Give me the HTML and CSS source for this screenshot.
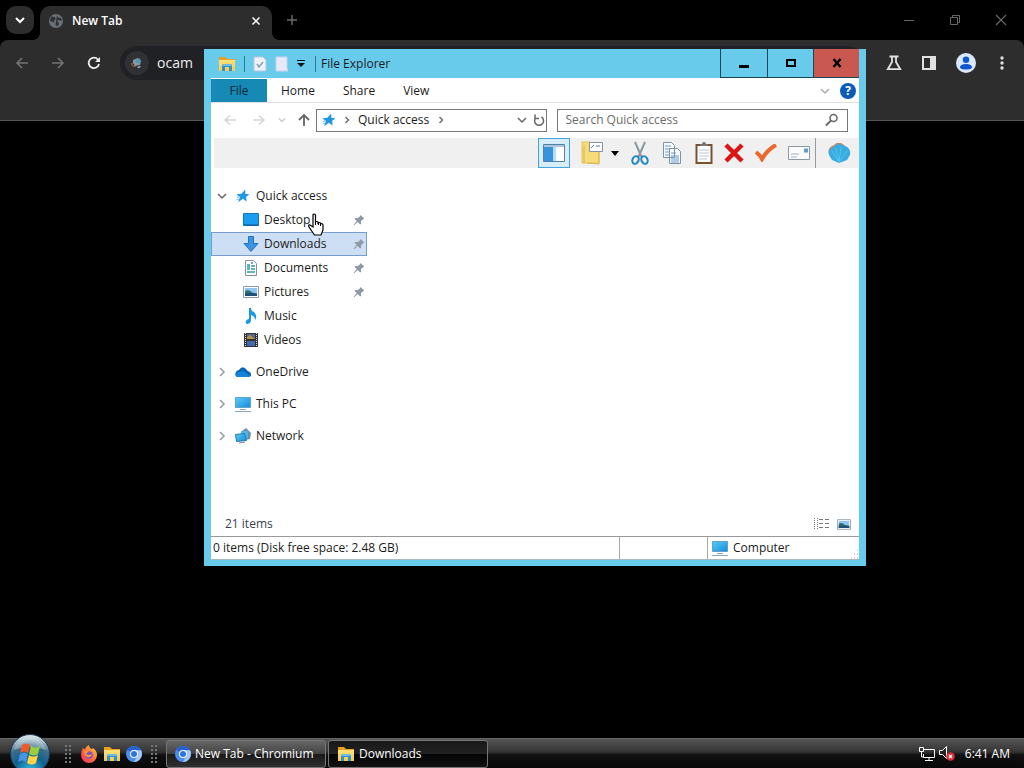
FILE: index.html
```html
<!DOCTYPE html>
<html lang="en">
<head>
<meta charset="utf-8">
<title>Desktop</title>
<link rel="stylesheet" href="styles.css">
</head>
<body>
<svg class="defs" aria-hidden="true">
  <defs>
    <linearGradient id="blue" x1="0" y1="0" x2="1" y2="1"><stop offset="0" stop-color="#59cdfa"/><stop offset="1" stop-color="#168bd6"/></linearGradient>
    <linearGradient id="fold" x1="0" y1="0" x2="0" y2="1"><stop offset="0" stop-color="#ffe27a"/><stop offset="1" stop-color="#f9c846"/></linearGradient>
    <radialGradient id="orb" cx=".5" cy=".95" r=".9"><stop offset="0" stop-color="#35c3e8"/><stop offset=".45" stop-color="#11608f"/><stop offset=".75" stop-color="#3f6f8c"/><stop offset="1" stop-color="#d5e2ea"/></radialGradient>
    <linearGradient id="fire" x1="1" y1="0" x2="0" y2="1"><stop offset="0" stop-color="#ffd93b"/><stop offset=".5" stop-color="#ff7139"/><stop offset="1" stop-color="#f0286a"/></linearGradient>
  </defs>
  <symbol id="folder" viewBox="0 0 18 16"><path d="M1 1h6l2 2h8v4H1z" fill="#e9a01c"/><path d="M1 4h16v11H1z" fill="url(#fold)"/><path d="M4 15V9.500q0-1.500 1.500-1.500h7q1.500 0 1.500 1.500V15h-3v-4H7v4z" fill="#2f93d3"/><path d="M4 9.500Q4 8 5.500 8h7Q14 8 14 9.500V10H4z" fill="#69bce9"/></symbol>
  <symbol id="chromium" viewBox="0 0 16 16"><circle cx="8" cy="8" r="8" fill="#4c8df2"/><path d="M8 8 1.200 3.800A8 8 0 0 1 15 4.200H8z" fill="#2562cf"/><path d="M8 4.200h7A8 8 0 0 1 8 16l3.300-6z" fill="#a5c8fa"/><circle cx="8" cy="8" r="4" fill="#fff"/><circle cx="8" cy="8" r="3" fill="#2c73e3"/></symbol>
  <symbol id="star" viewBox="0 0 14 14"><path d="M9.200.5 9.300 4.700 13.500 5.500 10.200 7.800 10.500 12.500 6.800 9.800 2.300 13.200 3.800 8.300.5 5.200 5.500 4.700z" fill="#2196e3"/><path d="m1 8.500 3-1M.5 11l3-1" stroke="#74bdf0"/></symbol>
  <symbol id="pc" viewBox="0 0 18 16"><path d="M1.500 1.500h15v10h-15z" fill="url(#blue)" stroke="#5fa3cc"/><path d="M6 13.500h6M1 15.500h16" stroke="#8aa6b8"/></symbol>
  <symbol id="pin" viewBox="0 0 12 12"><path d="m7.500 1 3.800 3.600-1.300.6-2 2 .1 2.600-1 .8L4.600 8 1.200 11.300.6 10.800 3.700 7 1.500 4.800l1-.8 2.500.1 2-1.900z" fill="#8d9aa8"/></symbol>
  <symbol id="pic" viewBox="0 0 16 12"><path d="M.5.5h15v11H.5z" fill="#fff" stroke="#8c9aa5"/><path d="M2 2h12v8H2z" fill="#8dc5ef"/><path d="M2 5q4-2 7 1.500l5 1V10H2z" fill="#2e6f75"/><path d="M2 7.500q6-1 12 .5v2H2z" fill="#205078"/></symbol>
  <symbol id="right" viewBox="0 0 8 10"><path d="m2 1 4 4-4 4" fill="none" stroke="currentColor" stroke-width="1.500"/></symbol>
  <symbol id="down" viewBox="0 0 10 8"><path d="m1 2 4 4 4-4" fill="none" stroke="currentColor" stroke-width="1.500"/></symbol>
</svg>

<main class="desktop">
  <section class="browser" aria-label="Chromium">
    <div class="tabstrip">
      <button class="tab-search" aria-label="Search tabs"><svg width="10" height="8" viewBox="0 0 10 8"><path d="m1 2 4 4 4-4" fill="none" stroke="#fff" stroke-width="2"/></svg></button>
      <div class="tab">
        <svg width="16" height="16" viewBox="0 0 16 16"><circle cx="8" cy="8" r="7" fill="#6b7077"/><path d="M3 3.500 6.500 4 8 6 6 7.500 6.500 10 5 9 2 8zM9 2l1 2.500 3 .5 1 3-3.500-1L9 8l2 2-1 3.500L7.500 12" fill="#303135"/></svg>
        <span class="tab-title">New Tab</span>
        <button class="plain" aria-label="Close tab"><svg width="10" height="10" viewBox="0 0 10 10"><path d="m1.500 1.500 7 7m0-7-7 7" stroke="#fff" stroke-width="1.500"/></svg></button>
      </div>
      <button class="plain new-tab" aria-label="New tab"><svg width="12" height="12" viewBox="0 0 12 12"><path d="M6 1v10M1 6h10" stroke="#66686b" stroke-width="1.500"/></svg></button>
      <div class="browser-controls">
        <button class="plain" aria-label="Minimize"><svg width="12" height="12" viewBox="0 0 12 12"><path d="M1 6.500h10" stroke="#666"/></svg></button>
        <button class="plain" aria-label="Restore"><svg width="12" height="12" viewBox="0 0 12 12"><path d="M1.500 3.500h7v7h-7zM3.500 3.500v-2h7v7h-2" fill="none" stroke="#666"/></svg></button>
        <button class="plain" aria-label="Close"><svg width="12" height="12" viewBox="0 0 12 12"><path d="m1 1 10 10M11 1 1 11" stroke="#666" stroke-width="1.200"/></svg></button>
      </div>
    </div>
    <div class="browser-bar">
      <button class="plain" aria-label="Back"><svg width="14" height="12" viewBox="0 0 14 12"><path d="M13 6H2m5-5L2 6l5 5" fill="none" stroke="#737373" stroke-width="1.600"/></svg></button>
      <button class="plain" aria-label="Forward"><svg width="14" height="12" viewBox="0 0 14 12"><path d="M1 6h11M7 1l5 5-5 5" fill="none" stroke="#737373" stroke-width="1.600"/></svg></button>
      <button class="plain" aria-label="Reload"><svg width="14" height="14" viewBox="0 0 14 14"><path d="M12 8a5.200 5.200 0 1 1-1.200-4.600L12.500 5" fill="none" stroke="#eee" stroke-width="1.800"/><path d="M13 1v5H8z" fill="#eee"/></svg></button>
      <label class="omnibox">
        <span class="site-icon"><svg width="14" height="14" viewBox="0 0 14 14"><path d="m3 4 5-2 3 3-1 4-5 1-2-3z" fill="#8799a3"/><path d="m5 5 4-3 2 3-3 3z" fill="#4f95b5"/><path d="M2 7q-1 4 4 3" stroke="#bd7340" fill="none"/><path d="m7 11 4-1-2 2z" fill="#e4e8ea"/></svg></span>
        <input type="text" value="ocam" aria-label="Address">
      </label>
      <div class="browser-tools">
        <button class="plain" aria-label="Experiments"><svg width="16" height="16" viewBox="0 0 16 16"><path d="M3.500 1.500h9M6 2v5L1.800 14.200h12.400L10 7V2" fill="none" stroke="#e1e1e1" stroke-width="1.800"/></svg></button>
        <button class="plain" aria-label="Side panel"><svg width="16" height="16" viewBox="0 0 16 16"><path d="M2 2h12v12H2z" fill="none" stroke="#e1e1e1" stroke-width="2"/><path d="M9 2h5v12H9z" fill="#e1e1e1"/></svg></button>
        <button class="plain" aria-label="Profile"><svg width="20" height="20" viewBox="0 0 20 20"><circle cx="10" cy="10" r="10" fill="#dbe7fd"/><circle cx="10" cy="6.800" r="3.200" fill="#0b57d0"/><path d="M4 14.500Q4 11 10 11t6 3.500V15q-2 1.500-6 1.500T4 15z" fill="#0b57d0"/></svg></button>
        <button class="plain menu" aria-label="Menu"><svg width="4" height="14" viewBox="0 0 4 14"><g fill="#e1e1e1"><circle cx="2" cy="2" r="1.700"/><circle cx="2" cy="7" r="1.700"/><circle cx="2" cy="12" r="1.700"/></g></svg></button>
      </div>
    </div>
  </section>

  <section class="window" aria-label="File Explorer">
    <header class="titlebar">
      <div class="quick-tools">
        <svg width="18" height="16"><use href="#folder"/></svg>
        <span class="divider"></span>
        <button class="plain" aria-label="Properties"><svg width="14" height="16" viewBox="0 0 14 16"><path d="M1 1h9l3 3v11H1z" fill="#eef2fb" stroke="#b7c6dc"/><path d="m4 8 2 3 4-5" fill="none" stroke="#8c9cb2" stroke-width="1.500"/></svg></button>
        <button class="plain" aria-label="New folder"><svg width="14" height="16" viewBox="0 0 14 16"><path d="M1 1h11v11l1 3H1z" fill="#e8e9f8" stroke="#c8d2ea"/></svg></button>
        <button class="plain" aria-label="Customize toolbar"><svg width="8" height="8" viewBox="0 0 8 8"><path d="M0 .5h8" stroke="#111"/><path d="M0 3h8L4 7z" fill="#111"/></svg></button>
        <span class="divider"></span>
      </div>
      <h1>File Explorer</h1>
      <div class="caption">
        <button aria-label="Minimize"><svg width="12" height="12" viewBox="0 0 12 12"><path d="M1 8h10v3H1z"/></svg></button>
        <button aria-label="Maximize"><svg width="12" height="12" viewBox="0 0 12 12"><path d="M2 3h8v6H2z" fill="none" stroke="#000" stroke-width="2"/></svg></button>
        <button class="close" aria-label="Close"><svg width="12" height="12" viewBox="0 0 12 12"><path d="m2.500 2 7 8m0-8-7 8" stroke="#000" stroke-width="2.400"/></svg></button>
      </div>
    </header>
    <div class="client">
      <nav class="ribbon">
        <button class="file">File</button><button>Home</button><button>Share</button><button>View</button>
        <div class="ribbon-end">
          <button class="plain" aria-label="Expand ribbon"><svg class="faint" width="10" height="8"><use href="#down"/></svg></button>
          <button class="plain help" aria-label="Help">?</button>
        </div>
      </nav>
      <div class="address-row">
        <div class="history">
          <button class="plain" aria-label="Back"><svg width="14" height="12" viewBox="0 0 14 12"><path d="M13 6H2m5-4.500L2 6l5 4.500" fill="none" stroke="#d4d4d4" stroke-width="1.500"/></svg></button>
          <button class="plain" aria-label="Forward"><svg width="14" height="12" viewBox="0 0 14 12"><path d="M1 6h11M7 1.500 12 6l-5 4.500" fill="none" stroke="#d4d4d4" stroke-width="1.500"/></svg></button>
          <button class="plain" aria-label="Recent"><svg class="pale" width="8" height="6" viewBox="0 0 10 8"><path d="m1 2 4 4 4-4" fill="none" stroke="currentColor" stroke-width="2"/></svg></button>
          <button class="plain" aria-label="Up"><svg width="12" height="14" viewBox="0 0 12 14"><path d="M6 13V2M1 7l5-5 5 5" fill="none" stroke="#666" stroke-width="1.800"/></svg></button>
        </div>
        <div class="path">
          <svg width="14" height="14"><use href="#star"/></svg>
          <svg class="gray" width="6" height="8" viewBox="0 0 8 10"><path d="m2 1 4 4-4 4" fill="none" stroke="currentColor" stroke-width="1.800"/></svg>
          <a href="#quick">Quick access</a>
          <svg class="gray" width="6" height="8" viewBox="0 0 8 10"><path d="m2 1 4 4-4 4" fill="none" stroke="currentColor" stroke-width="1.800"/></svg>
          <button class="plain path-open" aria-label="Previous locations"><svg class="gray" width="10" height="8"><use href="#down"/></svg></button>
          <button class="plain" aria-label="Refresh"><svg width="12" height="14" viewBox="0 0 12 14"><path d="M8.500 4A4.500 4.500 0 1 1 3 4.500M2 1.500v4h4" fill="none" stroke="#666" stroke-width="1.500"/></svg></button>
        </div>
        <label class="search"><input type="text" placeholder="Search Quick access" aria-label="Search Quick access"><svg width="14" height="14" viewBox="0 0 14 14"><circle cx="8.500" cy="5" r="3.500" fill="none" stroke="#666" stroke-width="1.500"/><path d="m6 7.500-5 5" stroke="#666" stroke-width="1.800"/></svg></label>
      </div>
      <div class="toolbar">
        <button class="plain active" aria-label="Navigation pane"><svg width="22" height="18" viewBox="0 0 22 18"><path d="M.5.500h21v17H.5z" fill="#fff" stroke="#5482a3"/><path d="M1 1h20v2H1z" fill="#a9c8df"/><path d="M1 3h9v14H1z" fill="#3793dc"/><path d="M10 3h3v14h-3z" fill="#b8dcf5"/></svg></button>
        <button class="plain" aria-label="Organize"><svg width="22" height="24" viewBox="0 0 22 24"><path d="M1 1h8v4h9v17H1z" fill="#f6dc79" stroke="#e7c354"/><path d="M3 22V4m3 18 12 1V10" stroke="#d6b64e" fill="none"/><path d="M8.500 1.500h13v9h-13z" fill="#fff" stroke="#8593a1"/><path d="m10 7 3-3m2 1h4" stroke="#587da8"/></svg></button>
        <button class="plain arrow" aria-label="More organize options"><svg width="8" height="5" viewBox="0 0 8 5"><path d="M0 0h8L4 5z"/></svg></button>
        <button class="plain" aria-label="Cut"><svg width="18" height="24" viewBox="0 0 18 24"><path d="m4 1 7 16M14 1 7 17" stroke="#8f989f" stroke-width="2"/><g fill="none" stroke="#2286be" stroke-width="2"><ellipse cx="4.500" cy="19" rx="3" ry="4" transform="rotate(25 4.500 19)"/><ellipse cx="13.500" cy="19" rx="3" ry="4" transform="rotate(-25 13.500 19)"/></g></svg></button>
        <button class="plain" aria-label="Copy"><svg width="20" height="22" viewBox="0 0 20 22"><g fill="#f8fbff" stroke="#7d92a7"><path d="M1.500.5h8l3 3v12h-11zM7.500 6.500h8l3 3v12h-11z"/></g><path d="M3 4h6M3 7h5M3 10h4M3 13h4m2-2h5m-5 3h8m-8 2h8m-8 2h8m-8 2h8" stroke="#699bd0"/></svg></button>
        <button class="plain" aria-label="Paste"><svg width="18" height="22" viewBox="0 0 18 22"><path d="M1.500 3h15v18h-15z" fill="#fff" stroke="#79512e" stroke-width="2"/><path d="M5 4V2h2l1-2h2l1 2h2v2z" fill="#777"/><path d="M4 8h10M4 11h10M4 14h10M4 17h8" stroke="#b5c7da"/></svg></button>
        <button class="plain" aria-label="Delete"><svg width="20" height="20" viewBox="0 0 20 20"><path d="m2 2 16 16M18 2 2 18" stroke="#dc1414" stroke-width="4.500"/></svg></button>
        <button class="plain" aria-label="Properties"><svg width="22" height="18" viewBox="0 0 22 18"><path d="M1 8q4 3 6 7Q12 6 21 1" fill="none" stroke="#ea682b" stroke-width="4"/></svg></button>
        <button class="plain" aria-label="Rename"><svg width="22" height="14" viewBox="0 0 22 14"><path d="M.5.5h21v13H.5z" fill="#fafafa" stroke="#8998a6"/><path d="M3 8h8m-8 3h6" stroke="#a0b0c4"/><path d="M16 2.500h4v4h-4z" fill="#619bd1"/></svg></button>
        <span class="divider"></span>
        <button class="plain shell" aria-label="Classic Explorer"><svg width="24" height="22" viewBox="0 0 24 22"><path d="M2 13Q0 6 7 4q5-6 11 0 6 2 5 9l-3 5-8 3-7-3z" fill="#38ace1"/><path d="M2 11Q0 6 7 3q5-5 11 1l-3-1Q10 0 7 5 2 6 2 11" fill="#b58b68"/><path d="m12 20-7-11m7 11-3-14m3 14 2-15m-2 15 8-11" stroke="#55c2ec" fill="none"/></svg></button>
      </div>
      <div class="content">
        <ul class="tree">
          <li id="quick"><a class="root" href="#quick"><svg class="gray" width="10" height="8"><use href="#down"/></svg><span class="icon"><svg width="14" height="14"><use href="#star"/></svg></span>Quick access</a>
            <ul>
              <li><a href="#desktop"><span class="icon"><svg width="16" height="14" viewBox="0 0 16 14"><path d="M.5.500h15v12H.5z" fill="#189df0" stroke="#1477b9"/><path d="M1 12h14" stroke="#0b5688"/></svg></span>Desktop<svg class="pin" width="12" height="12"><use href="#pin"/></svg></a></li>
              <li><a class="selected" href="#downloads"><span class="icon"><svg width="16" height="16" viewBox="0 0 16 16"><path d="M5.500.500h5v7h4.500L8 15.500 1 7.500h4.500z" fill="#3d94e5" stroke="#2472be"/></svg></span>Downloads<svg class="pin" width="12" height="12"><use href="#pin"/></svg></a></li>
              <li><a href="#documents"><span class="icon"><svg width="14" height="16" viewBox="0 0 14 16"><path d="M1.500.500h8l3 3v12h-11z" fill="#fff" stroke="#879199"/><path d="M3 5h3M3 7h3M3 9h3M3 12h8M7 3h2M7 6h4M7 9h4" stroke="#299cab" stroke-width="1.500"/></svg></span>Documents<svg class="pin" width="12" height="12"><use href="#pin"/></svg></a></li>
              <li><a href="#pictures"><span class="icon"><svg width="16" height="12"><use href="#pic"/></svg></span>Pictures<svg class="pin" width="12" height="12"><use href="#pin"/></svg></a></li>
              <li><a href="#music"><span class="icon"><svg width="12" height="16" viewBox="0 0 12 16"><path d="M4 0h2q0 3 3 4 4 4 1 8 0-4-4-5v6q-1 3-4 3-2-1-1-3 1-2 3-2z" fill="#159ae4"/></svg></span>Music</a></li>
              <li><a href="#videos"><span class="icon"><svg width="14" height="16" viewBox="0 0 14 16"><path d="M0 1h14v14H0z" fill="#333"/><path d="M1.500 1v14M12.500 1v14" stroke="#ddd" stroke-dasharray="1 1"/><path d="M3 2h8v5H3z" fill="#58668c"/><path d="M3 9h8v5H3z" fill="#3e68b3"/><path d="m3 5 3-2 5 4H3zm0 5 5 1 3 1z" fill="#b29245"/></svg></span>Videos</a></li>
            </ul>
          </li>
          <li><a class="root" href="#onedrive"><svg class="light" width="10" height="10" viewBox="0 0 10 10"><use href="#right" width="10" height="10"/></svg><span class="icon"><svg width="16" height="12" viewBox="0 0 16 12"><path d="M2 11Q-1 9 1 6q1-2 3-2 3-5 7-1 1 2 2 2 4 2 3 5l-2 1z" fill="#0a64b7"/><path d="m4 4 6 2 5 4q-1 1-3 1H3Q0 10 1 8q3-4 8-1" fill="#1484d8"/></svg></span>OneDrive</a></li>
          <li><a class="root" href="#pc-root"><svg class="light" width="10" height="10" viewBox="0 0 10 10"><use href="#right" width="10" height="10"/></svg><span class="icon"><svg width="18" height="16"><use href="#pc"/></svg></span>This PC</a></li>
          <li><a class="root" href="#network"><svg class="light" width="10" height="10" viewBox="0 0 10 10"><use href="#right" width="10" height="10"/></svg><span class="icon"><svg width="16" height="16" viewBox="0 0 16 16"><path d="m7 3 4-3 5 5-1 6-5 1z" fill="#758ca0"/><path d="M6 3h7v7H6z" fill="#4ab6eb"/><path d="m.5 6.500 9-1 2 7-10 1z" fill="url(#blue)" stroke="#237bb0"/><path d="m4 15 6-1" stroke="#789"/></svg></span>Network</a></li>
        </ul>
      </div>
      <div class="count-row">
        <span>21 items</span>
        <div class="views">
          <button class="plain" aria-label="Details view"><svg width="16" height="12" viewBox="0 0 16 12"><path d="M1.500 0v12M4.500 0v12" stroke="#777" stroke-dasharray="1 1"/><path d="M6 1.500h4m2 0h4M6 5.500h4m2 0h4M6 9.500h4m2 0h4" stroke="#777"/></svg></button>
          <button class="plain" aria-label="Large icons view"><svg width="14" height="11"><use href="#pic"/></svg></button>
        </div>
      </div>
      <footer class="status">
        <span>0 items (Disk free space: 2.48 GB)</span><span></span>
        <span class="computer"><svg width="18" height="16"><use href="#pc"/></svg>Computer</span>
        <svg class="grip" width="10" height="10" viewBox="0 0 10 10"><path d="M8 1h1M5 5h1m2 0h1M2 9h1m2 0h1m2 0h1" stroke="#aaa"/></svg>
      </footer>
    </div>
    <svg class="cursor" width="18" height="24" viewBox="0 0 18 24"><path d="M5 14V2q0-1 1.200-1T7.500 2v7q1-1 2.500 0v1q1-1 2.500 0v1q2-1 2.500 1v5l-2 5H6.500L1 14q-1-3 1-2z" fill="#fff" stroke="#000" stroke-width="1.200"/><path d="M7.500 8v4m3-2v2m2-1v2" stroke="#000"/></svg>
  </section>

  <footer class="taskbar">
    <button class="plain start" aria-label="Start"><svg width="40" height="40" viewBox="0 0 40 40"><circle cx="20" cy="20" r="19.500" fill="url(#orb)" stroke="#17384c"/><path d="M4 16a16.500 16.500 0 0 1 32 0q-16-6-32 0" fill="#fff" opacity=".3"/><path d="M12 11q4-3 8 0l-2 8q-4-3-8 0z" fill="#f05a28"/><path d="M21 12q4 3 9 0l-2 8q-4 3-9 0z" fill="#9bce3c"/><path d="M10 20q4-3 8 0l-2 8q-4-3-8 0z" fill="#4796e2"/><path d="M19 21q4 3 9 0l-2 8q-4 3-9 0z" fill="#ffd343"/></svg></button>
    <span class="dots"></span>
    <div class="launch">
      <button class="plain" aria-label="Firefox"><svg width="18" height="18" viewBox="0 0 18 18"><path d="M3 3q1 1 2 1Q6 1 9 0q0 3 3 4l1-1q4 3 4 7a8 8 0 0 1-16 0Q1 6 3 3" fill="url(#fire)"/><circle cx="9" cy="10" r="3.800" fill="#7952c7"/><path d="M4 6q3-1 5 1-2 0-3 2 3 2 6 0-1 4-5 3-3-2-3-6" fill="#ff9635"/></svg></button>
      <button class="plain" aria-label="Files"><svg width="18" height="16"><use href="#folder"/></svg></button>
      <button class="plain" aria-label="Chromium"><svg width="16" height="16"><use href="#chromium"/></svg></button>
    </div>
    <span class="dots"></span>
    <div class="tasks">
      <button class="task"><svg width="16" height="16"><use href="#chromium"/></svg>New Tab - Chromium</button>
      <button class="task current"><svg width="18" height="16"><use href="#folder"/></svg>Downloads</button>
    </div>
    <div class="tray">
      <svg width="16" height="14" viewBox="0 0 16 14"><path d="M5 2.500h10.500v8H4.500V7M10 11v2m-4 .5h8M.5.500h4v4h-4zM2.500 5v5h2" fill="none" stroke="#fff"/></svg>
      <svg width="16" height="15" viewBox="0 0 16 15"><path d="M.5 4.500h3l4-4v12l-4-4h-3z" fill="#222" stroke="#fff"/><circle cx="11.500" cy="10.500" r="4.300" fill="#db2e35"/><path d="m10 9 3 3m0-3-3 3" stroke="#fff" stroke-width="1.300"/></svg>
      <time>6:41 AM</time>
    </div>
  </footer>
</main>
</body>
</html>
```

FILE: styles.css
```css
* { box-sizing: border-box; }
body { margin: 0; background: #000; font: 12px/16px "Open Sans", "Noto Sans", sans-serif; color: #1c1c1c; }
button, input { font: inherit; color: inherit; }
button { cursor: pointer; }
svg { display: block; flex: none; }
a { color: inherit; text-decoration: none; }
ul { list-style: none; margin: 0; padding: 0; }
.defs { position: absolute; width: 0; height: 0; }
.plain { display: flex; align-items: center; justify-content: center; padding: 0; border: 0; background: none; }
.gray { color: #666; }
.light { color: #999; }
.faint { color: #aaa; }
.pale { color: #ccc; }
.desktop { position: relative; display: flex; flex-direction: column; min-height: 100vh; overflow: hidden; }

.tabstrip { display: flex; align-items: center; height: 40px; padding-left: 6px; }
.tab-search { display: grid; place-items: center; width: 28px; height: 28px; padding: 0; border: 0; border-radius: 10px; background: #2d2d2d; }
.tab { position: relative; align-self: flex-end; display: flex; align-items: center; gap: 8px; width: 232px; height: 34px; margin-left: 6px; padding: 0 11px 4px 8px; border-radius: 10px 10px 0 0; background: #2d2d2d; color: #fff; }
.tab::before, .tab::after { content: ""; position: absolute; bottom: 0; width: 8px; height: 8px; }
.tab::before { right: 100%; background: radial-gradient(circle at 0 0, transparent 8px, #2d2d2d 8px); }
.tab::after { left: 100%; background: radial-gradient(circle at 100% 0, transparent 8px, #2d2d2d 8px); }
.tab-title { flex: 1; font-weight: 600; }
.new-tab { margin-left: 14px; }
.browser-controls { display: flex; gap: 34px; margin-left: auto; padding-right: 17px; }
.browser-bar { display: flex; align-items: flex-start; height: 81px; padding: 6px 20px 0 15px; gap: 22px; border-bottom: 1px solid #555; border-radius: 8px 8px 0 0; background: #2d2d2d; }
.browser-bar .plain { height: 34px; }
.browser-bar > .plain:nth-child(3) { margin-right: -3px; }
.browser-tools { display: flex; gap: 19px; }
.browser-tools .menu { margin-left: 5px; }
.omnibox { display: flex; flex: 1; align-items: center; gap: 8px; height: 34px; padding-left: 5px; border-radius: 17px; background: #202124; }
.site-icon { display: grid; place-items: center; width: 24px; height: 24px; border-radius: 50%; background: #303134; }
.omnibox input { flex: 1; min-width: 0; padding: 0; border: 0; outline: 0; background: none; color: #eee; font-size: 14px; }

.window { position: absolute; top: 49px; right: 158px; bottom: 202px; left: 204px; display: flex; flex-direction: column; min-width: 600px; min-height: 517px; padding: 0 7px 6px; background: #68cbec; }
.titlebar { display: flex; align-items: center; flex: none; height: 29px; padding-left: 7px; }
.quick-tools { display: flex; align-items: center; gap: 8px; }
.quick-tools .divider { width: 1px; height: 16px; background: #28799b; }
.quick-tools .divider:last-child { margin-left: 2px; }
h1 { margin: 0 0 0 5px; font-size: 12px; font-weight: 400; }
.caption { display: flex; align-self: stretch; margin-left: auto; }
.caption button { display: grid; place-items: center; width: 46px; padding: 0; border: solid #174656; border-width: 0 0 1px 1px; background: none; }
.caption button:first-child { width: 47px; }
.caption .close { background: #c85850; }
.client { display: flex; flex: 1; flex-direction: column; min-height: 0; background: #fff; }
.ribbon { display: flex; flex: none; height: 25px; padding-top: 1px; border-bottom: 1px solid #e0e0e0; }
.ribbon > button { padding: 0 14px; border: 0; background: none; }
.ribbon > .file { width: 56px; background: #1689b4; color: #092838; }
.ribbon-end { display: flex; align-items: center; gap: 10px; margin-left: auto; padding-right: 3px; }
.help { width: 16px; height: 16px; border-radius: 50%; background: #0b5cb8; color: #fff; font-weight: 700; }
.address-row { display: flex; align-items: center; flex: none; height: 35px; padding: 0 11px 1px 12px; gap: 10px; }
.history { display: flex; align-items: center; flex: none; gap: 12px; width: 93px; margin-right: -10px; }
.history .plain:nth-child(2) { margin-left: 3px; }
.path { display: flex; flex: 230; align-items: center; gap: 9px; min-width: 0; height: 23px; padding: 0 2px 0 5px; border: 1px solid #777; white-space: nowrap; }
.path svg { margin-right: -1px; }
.path-open { margin-left: auto; margin-right: -2px; }
.search { display: flex; flex: 284; align-items: center; height: 23px; padding: 0 8px; border: 1px solid #777; }
.search input { flex: 1; min-width: 0; padding: 0; border: 0; outline: 0; }
.search input::placeholder { color: #6b6b6b; opacity: 1; }
.toolbar { display: flex; align-items: center; justify-content: flex-end; flex: none; height: 30px; margin-left: 3px; padding-right: 8px; gap: 11px; background: #f0f0f0; }
.toolbar .active { width: 32px; height: 30px; border: 1px solid #41a4df; background: #d7edfb; }
.toolbar .arrow { margin: 0 1px 0 -3px; }
.toolbar .plain:nth-child(5) { margin-left: 2px; }
.toolbar .plain:nth-child(6) { margin-left: 2px; }
.toolbar .divider { align-self: stretch; width: 1px; margin-left: -6px; background: #999; }
.content { flex: 1; min-height: 0; padding-top: 16px; }
.tree { width: 156px; }
.tree > li { margin-bottom: 8px; }
.tree a { display: flex; align-items: center; height: 24px; padding: 0 1px 0 30px; border: 1px solid transparent; }
.tree .root { padding-left: 5px; }
.tree .icon { display: grid; place-items: center; width: 18px; margin-right: 4px; }
.tree .selected { border-color: #789ccd; background: #cddff4; }
.tree .root .icon { margin-left: 7px; }
.tree .pin { margin-left: auto; }
.count-row { display: flex; align-items: center; justify-content: space-between; flex: none; height: 24px; padding: 0 8px 0 14px; color: #374353; }
.views { display: flex; align-items: center; gap: 8px; }
.status { position: relative; display: grid; grid-template-columns: 409fr 88fr 151fr; flex: none; height: 24px; border-top: 1px solid #999; border-bottom: 1px solid #a9b8bd; }
.status span { display: flex; align-items: center; padding-left: 2px; border-right: 1px solid #aaa; white-space: nowrap; }
.status .computer { gap: 4px; padding-left: 3px; border: 0; }
.grip { position: absolute; right: 0; bottom: 0; }
.cursor { position: absolute; left: 104px; top: 164px; }

.taskbar { display: flex; align-items: center; height: 30px; margin-top: auto; padding: 0 14px 0 10px; border-top: 1px solid #666; background: linear-gradient(#555 0, #333 45%, #101010 55%, #080808); color: #fff; }
.start { align-self: flex-start; height: 40px; margin-top: -5px; }
.dots { width: 8px; height: 20px; margin: 0 8px 0 14px; background: radial-gradient(circle, #777 1px, transparent 1px) 0 0 / 4px 4px; }
.launch { display: flex; align-items: center; gap: 5px; }
.launch + .dots { margin: 0 8px; }
.tasks { display: flex; flex: 1; gap: 2px; }
.task { display: flex; align-items: center; gap: 4px; width: 160px; height: 28px; padding: 0 8px; border: 1px solid #777; border-radius: 3px; background: linear-gradient(#666, #444 48%, #1a1a1a 52%, #303030); white-space: nowrap; }
.task.current { background: linear-gradient(#181818, #222 48%, #050505 52%, #111); }
.tray { display: flex; align-items: center; gap: 4px; }
.tray time { margin-left: 6px; }
```
